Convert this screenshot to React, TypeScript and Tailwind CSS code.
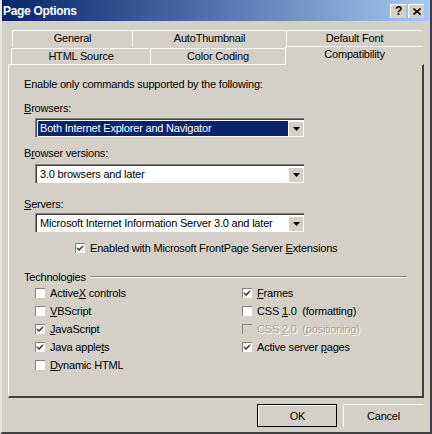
import React from 'react';

const font = "font-['Liberation_Sans',Arial,sans-serif]";

const Key: React.FC<{ children: React.ReactNode }> = ({ children }) => (
  <span className="underline underline-offset-[1px]">{children}</span>
);

const Check: React.FC<{ checked?: boolean; disabled?: boolean }> = ({ checked, disabled }) => (
  <span
    className={`relative inline-block w-[10px] h-[10px] shrink-0 border-t border-l border-[#808080] border-r-white border-b-white ${
      disabled ? 'bg-[#d4d0c8]' : 'bg-white'
    }`}
  >
    {checked && (
      <svg viewBox="0 0 8 8" className="absolute left-0 top-0 w-[8px] h-[8px]">
        <path d="M1 3.5 L3 5.5 L7 1.5 M1 4.5 L3 6.5 L7 2.5" stroke="#000" strokeWidth="1" fill="none" />
      </svg>
    )}
  </span>
);

const CheckRow: React.FC<{ checked?: boolean; disabled?: boolean; children: React.ReactNode }> = ({
  checked,
  disabled,
  children,
}) => (
  <div className="flex items-center h-[18px] gap-[5px]">
    <Check checked={checked} disabled={disabled} />
    <span className={disabled ? 'text-[#a8a49c] [text-shadow:1px_1px_0_#fff]' : ''}>{children}</span>
  </div>
);

const Combo: React.FC<{ value: string; selected?: boolean }> = ({ value, selected }) => (
  <div className="ml-[11px] w-[269px] h-[19px] flex border-t border-l border-[#808080] border-r-white border-b-white">
    <div className="flex-1 flex bg-white border-t border-l border-[#404040] border-r-[#d4d0c8] border-b-[#d4d0c8] p-[1px]">
      <div className={`flex-1 flex items-center pl-[2px] ${selected ? 'bg-[#0a246a] text-white' : ''}`}>{value}</div>
      <div className="w-[15px] flex items-center justify-center bg-[#d4d0c8] border-t border-l border-white border-r-[#404040] border-b-[#404040]">
        <svg viewBox="0 0 7 4" className="w-[7px] h-[4px]">
          <path d="M0 0 H7 L3.5 4 Z" fill="#000" />
        </svg>
      </div>
    </div>
  </div>
);

const Tab: React.FC<{ w: string; children: React.ReactNode; active?: boolean }> = ({ w, children, active }) => (
  <div
    className={`${w} flex items-center justify-center border-t border-l border-white border-r-[#404040] rounded-t-[2px] ${
      active ? 'h-[19px] -mb-px bg-[#d4d0c8] relative z-10 pb-[3px]' : 'h-[16px]'
    }`}
  >
    {children}
  </div>
);

const Button: React.FC<{ children: React.ReactNode; def?: boolean }> = ({ children, def }) => (
  <div className={`w-[80px] h-[23px] ${def ? 'border border-black' : ''}`}>
    <div className="w-full h-full flex items-center justify-center border-t border-l border-white border-r-[#404040] border-b-[#404040]">
      {children}
    </div>
  </div>
);

export default function App() {
  return (
    <div
      className={`${font} w-[432px] h-[434px] bg-[#d4d0c8] text-[11px] tracking-[-0.2px] text-black border-r-2 border-b-2 border-[#404040] border-t-0 border-l-2 border-l-[#e8e6e1] flex flex-col leading-none`}
    >
      <div className="h-[21px] bg-gradient-to-r from-[#0a246a] to-[#a6caf0] flex items-center justify-between pl-[1px] pr-[6px]">
        <span className="text-white font-bold text-[12px] tracking-[-0.3px]">Page Options</span>
        <div className="flex gap-[2px]">
          <div className="w-[16px] h-[14px] bg-[#d4d0c8] border-t border-l border-white border-r-[#404040] border-b-[#404040] flex items-center justify-center font-bold text-[12px]">
            ?
          </div>
          <div className="w-[16px] h-[14px] bg-[#d4d0c8] border-t border-l border-white border-r-[#404040] border-b-[#404040] flex items-center justify-center">
            <svg viewBox="0 0 8 7" className="w-[8px] h-[7px]">
              <path d="M0.5 0.5 L7.5 6.5 M7.5 0.5 L0.5 6.5" stroke="#000" strokeWidth="1.6" />
            </svg>
          </div>
        </div>
      </div>

      <div className="pl-[6px] pr-[6px] mt-[9px] flex flex-col">
        <div className="flex pl-[4px]">
          <Tab w="w-[120px]">General</Tab>
          <Tab w="w-[154px]">AutoThumbnail</Tab>
          <Tab w="w-[136px]">Default Font</Tab>
        </div>
        <div className="flex items-end pl-[3px]">
          <Tab w="w-[139px]">HTML Source</Tab>
          <Tab w="w-[135px]">Color Coding</Tab>
          <Tab w="w-[138px]" active>
            Compatibility
          </Tab>
        </div>
        <div className="h-[334px] border-t border-l border-white border-r-2 border-r-[#404040] border-b-2 border-b-[#404040] pl-[15px] pt-[12px] flex flex-col">
          <div className="h-[14px] flex items-center">Enable only commands supported by the following:</div>
          <div className="mt-[10px] h-[14px] flex items-center">
            <Key>B</Key>rowsers:
          </div>
          <div className="mt-[3px]">
            <Combo value="Both Internet Explorer and Navigator" selected />
          </div>
          <div className="mt-[9px] h-[14px] flex items-center">
            B<Key>r</Key>owser versions:
          </div>
          <div className="mt-[4px]">
            <Combo value="3.0 browsers and later" />
          </div>
          <div className="mt-[14px] h-[14px] flex items-center">
            <Key>S</Key>ervers:
          </div>
          <div className="mt-[2px]">
            <Combo value="Microsoft Internet Information Server 3.0 and later" />
          </div>
          <div className="mt-[7px] pl-[51px]">
            <CheckRow checked>
              Enabled with Microsoft FrontPage Server <Key>E</Key>xtensions
            </CheckRow>
          </div>
          <div className="mt-[13px] h-[14px] flex items-center gap-[4px] pr-[15px]">
            <span>Technologies</span>
            <div className="flex-1 h-[2px] border-t border-[#808080] border-b border-b-white" />
          </div>
          <div className="mt-[0px] flex pl-[11px]">
            <div className="w-[207px] flex flex-col">
              <CheckRow>
                Active<Key>X</Key> controls
              </CheckRow>
              <CheckRow>
                <Key>V</Key>BScript
              </CheckRow>
              <CheckRow checked>
                <Key>J</Key>avaScript
              </CheckRow>
              <CheckRow checked>
                Java apple<Key>t</Key>s
              </CheckRow>
              <CheckRow>
                <Key>D</Key>ynamic HTML
              </CheckRow>
            </div>
            <div className="flex flex-col">
              <CheckRow checked>
                <Key>F</Key>rames
              </CheckRow>
              <CheckRow>
                CSS <Key>1</Key>.0 &nbsp;(formatting)
              </CheckRow>
              <CheckRow disabled>
                CSS <Key>2</Key>.0 &nbsp;(positioning)
              </CheckRow>
              <CheckRow checked>
                Active server <Key>p</Key>ages
              </CheckRow>
            </div>
          </div>
        </div>
        <div className="mt-[6px] flex justify-end gap-[6px] pr-[1px]">
          <Button def>OK</Button>
          <Button>Cancel</Button>
        </div>
      </div>
    </div>
  );
}
